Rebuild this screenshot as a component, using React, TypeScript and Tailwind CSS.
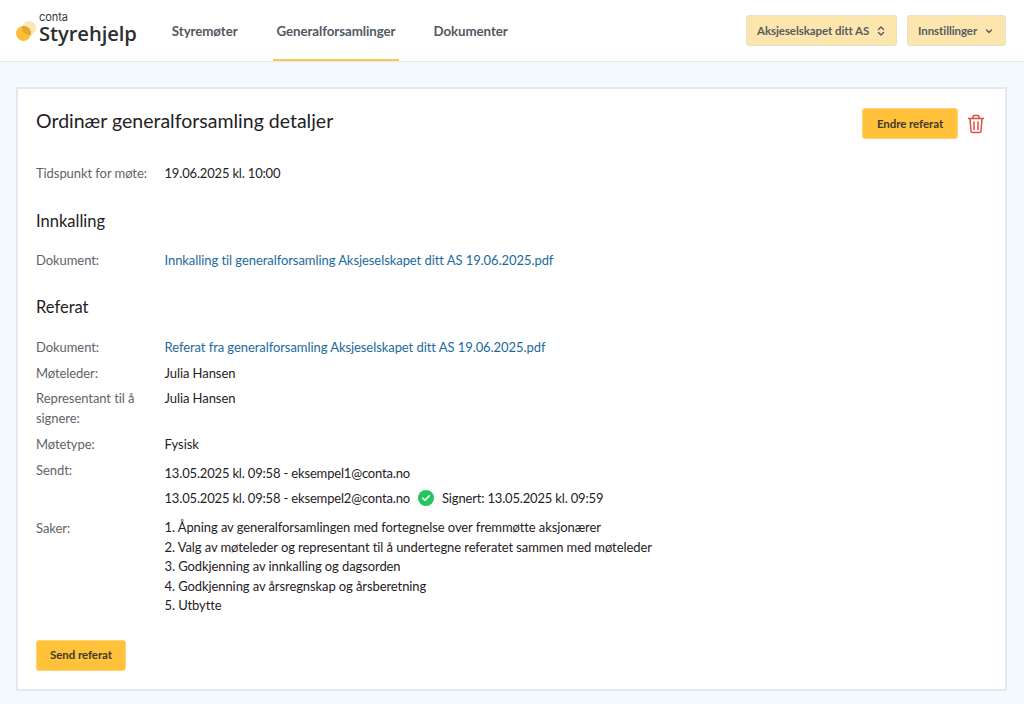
import React from "react";

function Logo() {
  return (
    <div className="flex items-center gap-[1px]">
      <svg width="22" height="24" viewBox="0 0 22 24" className="mt-[2px]">
        <circle cx="13" cy="8" r="7" fill="#fde6b4" />
        <circle cx="7.5" cy="13.5" r="7.5" fill="#fdbf38" />
        <path d="M6.27 6.11 A7.5 7.5 0 0 1 14.89 14.73 A7 7 0 0 1 6.27 6.11 Z" fill="#e3a733" />
      </svg>
      <div className="flex flex-col mb-[6px]">
        <span className="text-[11px] leading-[11px] text-[#33363a]" style={{ fontFamily: "Inter, sans-serif" }}>conta</span>
        <span className="text-[20.2px] leading-[20px] font-semibold text-[#2b2e32]" style={{ fontFamily: "'Open Sans', sans-serif" }}>Styrehjelp</span>
      </div>
    </div>
  );
}

function Row({ label, children, className = "" }: { label: string; children: React.ReactNode; className?: string }) {
  return (
    <div className={"flex " + className}>
      <div className="w-[128.5px] shrink-0 pr-3 text-[#5f6368]">{label}</div>
      <div className="text-[#1f2125]">{children}</div>
    </div>
  );
}

const link = "text-[#1c6a9c]";
const date = "tracking-[-0.17px]";

export default function App() {
  return (
    <div className="min-h-[704px] bg-[#f3fafe] text-[13px] tracking-[-0.07px] leading-5" style={{ fontFamily: "Lato, sans-serif" }}>
      <header className="h-[62px] bg-white border-b border-[#e2ebf0] flex items-center pl-4 pr-[18px]">
        <Logo />
        <nav className="flex h-full ml-[31px] font-bold text-[#53585f] text-[13.3px]">
          <a className="h-full flex items-center px-1 mr-[31px]">Styremøter</a>
          <a className="h-full flex items-center px-1 mr-[30px] border-b-2 border-[#fcc64f] pt-[2px]">Generalforsamlinger</a>
          <a className="h-full flex items-center px-1">Dokumenter</a>
        </nav>
        <div className="ml-auto flex gap-[10px] text-[11.5px] font-bold text-[#575b60]">
          <button className="h-[31px] w-[151px] rounded-[3px] bg-[#fde6ad] border border-[#e5e0cc] flex items-center justify-between pl-[10px] pr-[10px]">
            <span>Aksjeselskapet ditt AS</span>
            <svg width="10" height="12" viewBox="0 0 10 12" fill="none" stroke="#575b60" strokeWidth="1.4" strokeLinecap="round" strokeLinejoin="round"><path d="M2.5 4.5 5 2l2.5 2.5M2.5 7.5 5 10l2.5-2.5" /></svg>
          </button>
          <button className="h-[31px] w-[99px] rounded-[3px] bg-[#fde6ad] border border-[#e5e0cc] flex items-center justify-between pl-[10px] pr-[11px]">
            <span>Innstillinger</span>
            <svg width="10" height="10" viewBox="0 0 10 10" fill="none" stroke="#575b60" strokeWidth="1.4" strokeLinecap="round" strokeLinejoin="round"><path d="M2.5 4 5 6.5 7.5 4" /></svg>
          </button>
        </div>
      </header>

      <main className="pl-4 pr-[17px] pt-[25px] pb-[14px]">
        <section className="bg-white border-2 border-[#e2e9f2] h-[604px] pl-[18px] pr-[20px] pt-[19px]">
          <div className="flex items-start justify-between">
            <h1 className="text-[19.5px] leading-6 font-normal tracking-normal text-[#1f2125] mt-[1px]">Ordinær generalforsamling detaljer</h1>
            <div className="flex items-center gap-[9px]">
              <button className="h-[31px] w-[96px] rounded-[3px] bg-[#ffc23a] border border-[#ffd272] text-[11.5px] font-bold text-[#3f3a2c]">Endre referat</button>
              <svg width="18" height="20" viewBox="0 0 18 20" fill="none" stroke="#dd4f45" strokeWidth="1.5" strokeLinecap="round" strokeLinejoin="round"><path d="M1.5 4.5h15M6 4.5V3a1.5 1.5 0 0 1 1.5-1.5h3A1.5 1.5 0 0 1 12 3v1.5M3 4.5l1 12.5a1.6 1.6 0 0 0 1.6 1.5h6.8A1.6 1.6 0 0 0 14 17l1-12.5M7 8v7.5M11 8v7.5" /></svg>
            </div>
          </div>

          <Row label="Tidspunkt for møte:" className="mt-[24px]"><span className={date}>19.06.2025 kl. 10:00</span></Row>

          <h2 className="mt-[26px] text-[16.5px] tracking-normal leading-6 font-normal text-[#1f2125]">Innkalling</h2>
          <Row label="Dokument:" className="mt-[17px]"><a className={link}>Innkalling til generalforsamling Aksjeselskapet ditt AS 19.06.2025.pdf</a></Row>

          <h2 className="mt-[25px] text-[16.5px] tracking-normal leading-6 font-normal text-[#1f2125]">Referat</h2>
          <Row label="Dokument:" className="mt-[18px]"><a className={link}>Referat fra generalforsamling Aksjeselskapet ditt AS 19.06.2025.pdf</a></Row>
          <Row label="Møteleder:" className="mt-[6px]">Julia Hansen</Row>
          <Row label="Representant til å signere:" className="mt-[5px]">Julia Hansen</Row>
          <Row label="Møtetype:" className="mt-[6px]">Fysisk</Row>
          <Row label="Sendt:" className="mt-[6px]">
            <div className={"pt-[3px] " + date}>13.05.2025 kl. 09:58 - eksempel1@conta.no</div>
            <div className={"mt-[5px] flex items-center " + date}>
              <span>13.05.2025 kl. 09:58 - eksempel2@conta.no</span>
              <svg width="16" height="16" viewBox="0 0 16 16" className="ml-2"><circle cx="8" cy="8" r="8" fill="#22c55e" /><path d="M4.8 8.2 7 10.3l4.2-4.4" fill="none" stroke="#fff" strokeWidth="1.6" strokeLinecap="round" strokeLinejoin="round" /></svg>
              <span className="ml-2">Signert: 13.05.2025 kl. 09:59</span>
            </div>
          </Row>
          <Row label="Saker:" className="mt-[10px]">
            <div className="leading-[19.5px] tracking-[-0.09px]">
              <div>1. Åpning av generalforsamlingen med fortegnelse over fremmøtte aksjonærer</div>
              <div>2. Valg av møteleder og representant til å undertegne referatet sammen med møteleder</div>
              <div>3. Godkjenning av innkalling og dagsorden</div>
              <div>4. Godkjenning av årsregnskap og årsberetning</div>
              <div>5. Utbytte</div>
            </div>
          </Row>
          <button className="mt-[24px] h-[31px] w-[90px] rounded-[3px] bg-[#ffc23a] border border-[#ffd272] text-[11.5px] font-bold text-[#3f3a2c]">Send referat</button>
        </section>
      </main>
    </div>
  );
}
